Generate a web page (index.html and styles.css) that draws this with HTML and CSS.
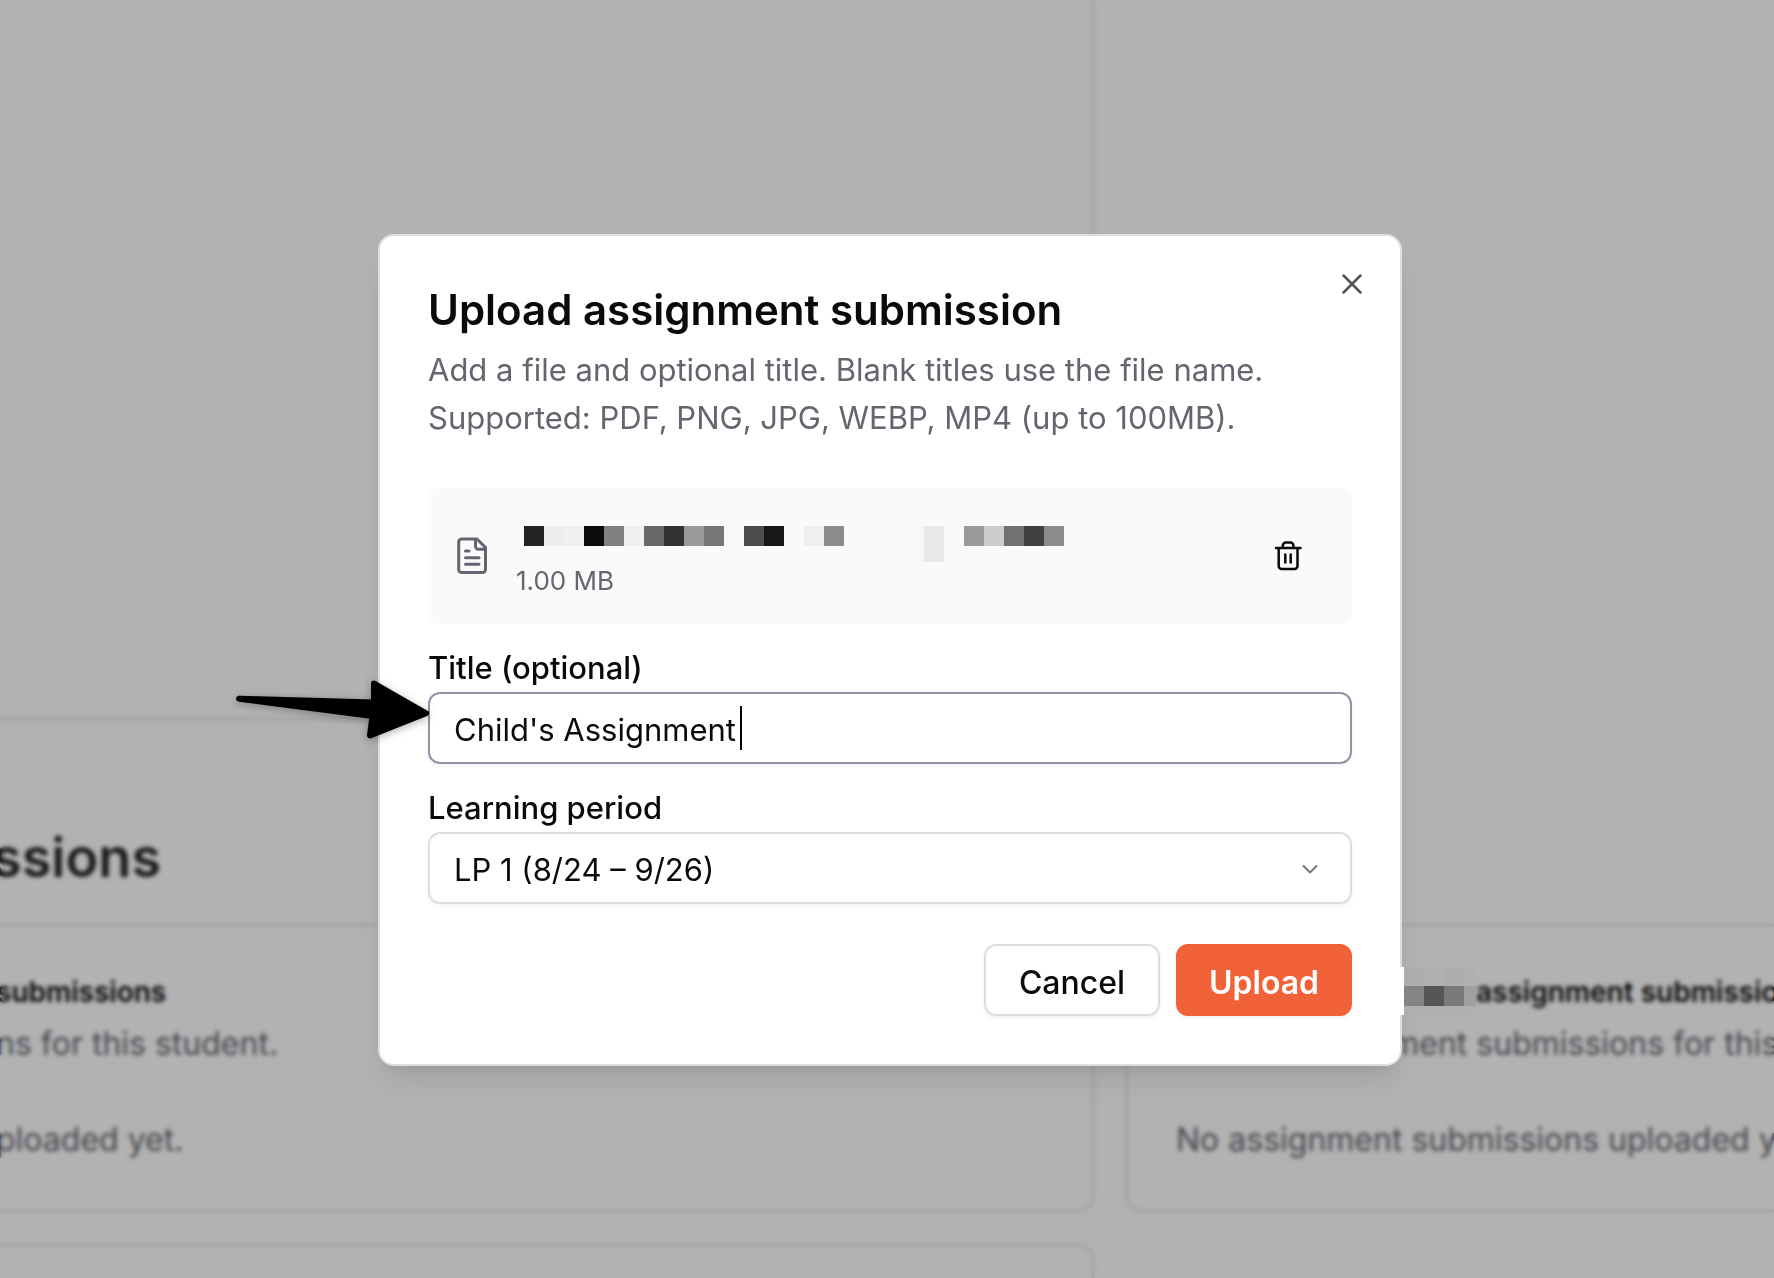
FILE: index.html
```html
<!DOCTYPE html>
<html lang="en">
<head>
<meta charset="utf-8">
<meta name="viewport" content="width=device-width, initial-scale=1">
<title>Upload assignment submission</title>
<link rel="stylesheet" href="styles.css">
</head>
<body>
<main class="page">
  <section class="panel"></section>
  <header class="section-head"><h1>ssions</h1></header>
  <article class="card card-left">
    <h2>submissions</h2>
    <p>ns for this student.</p>
    <p class="empty">ploaded yet.</p>
  </article>
  <article class="card card-right">
    <h2><span class="name-slot"></span>assignment submissions</h2>
    <p>Upload assignment submissions for this student.</p>
    <p class="empty">No assignment submissions uploaded yet.</p>
  </article>
  <article class="card card-left card-next"></article>
</main>

<div class="overlay">
  <div class="dialog" role="dialog" aria-modal="true" aria-labelledby="dialog-title">
    <h2 class="dialog-title" id="dialog-title">Upload assignment submission</h2>
    <p class="dialog-text">Add a file and optional title. Blank titles use the file name. <br>Supported: PDF, PNG, JPG, WEBP, MP4 (up to 100MB).</p>

    <div class="file">
      <svg class="file-icon" viewBox="0 0 40 40" fill="none" stroke="currentColor" stroke-width="3" stroke-linecap="round" stroke-linejoin="round" aria-hidden="true">
        <path d="M25 3H9.700a3 3 0 0 0-3 3V33.500a3 3 0 0 0 3 3H30.500a3 3 0 0 0 3-3V11.500Z"/>
        <path d="M23.500 3.500V10.300a3 3 0 0 0 3 3H33"/>
        <path d="M13.500 15H17M13.500 21.700H27M13.500 28.300H27"/>
      </svg>
      <div class="file-info">
        <svg class="file-name" viewBox="0 0 540 36" shape-rendering="crispEdges" role="img" aria-label="File name hidden">
          <g>
            <path fill="#242424" d="M0 0h20v20H0z"/>
            <path fill="#ededed" d="M20 0h20v20H20z"/>
            <path fill="#f0f0f0" d="M40 0h20v20H40z"/>
            <path fill="#0b0b0d" d="M60 0h20v20H60z"/>
            <path fill="#818181" d="M80 0h20v20H80z"/>
            <path fill="#f0f0f0" d="M100 0h20v20h-20z"/>
            <path fill="#686868" d="M120 0h20v20h-20z"/>
            <path fill="#313131" d="M140 0h20v20h-20z"/>
            <path fill="#9a9a9a" d="M160 0h20v20h-20z"/>
            <path fill="#767676" d="M180 0h20v20h-20z"/>
            <path fill="#f8f8f8" d="M200 0h20v20h-20z"/>
            <path fill="#4c4c4c" d="M220 0h20v20h-20z"/>
            <path fill="#171717" d="M240 0h20v20h-20z"/>
            <path fill="#f0f0f0" d="M280 0h20v20h-20z"/>
            <path fill="#8b8b8b" d="M300 0h20v20h-20z"/>
            <path fill="#f8f8f8" d="M380 0h20v36h-20z"/>
            <path fill="#e8e8e8" d="M400 0h20v36h-20z"/>
            <path fill="#9a9a9a" d="M440 0h20v20h-20z"/>
            <path fill="#cdcdcd" d="M460 0h20v20h-20z"/>
            <path fill="#717171" d="M480 0h20v20h-20z"/>
            <path fill="#404040" d="M500 0h20v20h-20z"/>
            <path fill="#8c8c8c" d="M520 0h20v20h-20z"/>
          </g>
        </svg>
        <span class="file-size">1.00 MB</span>
      </div>
      <button class="icon-button" type="button" aria-label="Remove file">
        <svg viewBox="0 0 32 32" fill="none" stroke="currentColor" stroke-width="2.500" stroke-linecap="round" stroke-linejoin="round" aria-hidden="true">
          <path d="M4 8H28.500M6.700 8V26a3 3 0 0 0 3 3H22.500a3 3 0 0 0 3-3V8M10.800 8V5.500a3 3 0 0 1 3-3h4.600a3 3 0 0 1 3 3V8"/>
          <path d="M13.300 14.500V22.500M18.700 14.500V22.500"/>
        </svg>
      </button>
    </div>

    <div class="field">
      <label for="title">Title (optional)</label>
      <div class="control">
        <input id="title" class="input is-focused" type="text" value="Child's Assignment">
        <span class="caret"></span>
        <svg class="arrow" viewBox="0 0 200 66" aria-hidden="true">
          <path d="M7 22.700 142 26.500 142 7.500 194 37.300 138 59.500 140.500 40Z" fill="#000" stroke="#000" stroke-width="6" stroke-linejoin="round"/>
        </svg>
      </div>
    </div>

    <div class="field">
      <label for="period">Learning period</label>
      <div class="control">
        <select id="period" class="input"><option>LP 1 (8/24 – 9/26)</option></select>
        <svg class="chevron" viewBox="0 0 20 20" fill="none" stroke="currentColor" stroke-width="2" stroke-linecap="round" stroke-linejoin="round" aria-hidden="true"><path d="M3.500 8 10 14.500 16.500 8"/></svg>
      </div>
    </div>

    <div class="actions">
      <button class="button" type="button">Cancel</button>
      <button class="button button-primary" type="button">Upload</button>
    </div>

    <button class="icon-button close" type="button" aria-label="Close">
      <svg viewBox="0 0 32 32" fill="none" stroke="currentColor" stroke-width="2.500" stroke-linecap="round" aria-hidden="true"><path d="M7.500 7.500 24.500 24.500M24.500 7.500 7.500 24.500"/></svg>
    </button>

    <svg class="name-mask" viewBox="0 0 76 48" shape-rendering="crispEdges" aria-hidden="true">
      <path fill="#aeaeae" d="M4 0h20v48H4z"/>
      <path fill="#b0b0b0" d="M24 0h52v48H24z"/>
      <path fill="#adadad" d="M44 0h20v19H44z"/>
      <path fill="#fff" d="M0 0h4v48H0z"/>
      <path fill="#848484" d="M4 19h20v20H4z"/>
      <path fill="#565656" d="M24 19h20v20H24z"/>
      <path fill="#7a7a7a" d="M44 19h20v20H44z"/>
      <path fill="#a0a0a0" d="M64 19h12v20H64z"/>
    </svg>
  </div>
</div>
</body>
</html>
```
FILE: styles.css
```css
* { box-sizing: border-box; }

body {
  margin: 0;
  background: #fff;
  color: #0a0a0a;
  font-family: Inter, "Liberation Sans", sans-serif;
}

h1, h2, p { margin: 0; }

button, input, select { font: inherit; color: inherit; }

/* Page behind the dialog */
.page {
  display: grid;
  grid-template-columns: minmax(0, 1094fr) minmax(0, 648fr);
  grid-template-rows: auto auto auto 1fr;
  column-gap: 32px;
  min-height: 100vh;
}

.panel {
  grid-column: 1;
  height: 720px;
  border: solid #dedede;
  border-width: 0 2px 2px 0;
}

.section-head {
  grid-column: 1;
  padding: 106px 0 34px;
  overflow: hidden;
}

.section-head h1 {
  margin-left: -8px;
  font-size: 54px;
  line-height: 64px;
  font-weight: 600;
  color: #27272a;
}

.card {
  padding: 46px 0;
  border: 2px solid #dedede;
  white-space: nowrap;
  overflow: hidden;
}

.card-left {
  grid-column: 1;
  border-left: 0;
  border-radius: 0 16px 16px 0;
}

.card-left h2,
.card-left p { margin-left: -4px; }

.card-right {
  grid-column: 2;
  padding-left: 48px;
  border-right: 0;
  border-radius: 16px 0 0 16px;
}

.card-next {
  margin-top: 32px;
  padding: 0;
  border-bottom: 0;
  border-radius: 0 16px 0 0;
}

.card h2 {
  font-size: 28px;
  line-height: 40px;
  font-weight: 600;
}

.card p {
  margin-top: 8px;
  font-size: 32px;
  line-height: 48px;
  color: #65656f;
}

.card .empty { margin-top: 48px; }

.name-slot {
  display: inline-block;
  width: 300px;
}

/* Dialog */
.overlay {
  position: fixed;
  inset: 0;
  display: flex;
  justify-content: center;
  align-items: flex-start;
  padding: 234px 0 48px 6px;
  background: rgba(0, 0, 0, 0.3);
  backdrop-filter: blur(2px);
}

.dialog {
  position: relative;
  width: 100%;
  max-width: 1024px;
  padding: 48px;
  border: 2px solid #dedede;
  border-radius: 16px;
  background: #fff;
  box-shadow: 0 20px 30px -6px rgba(0, 0, 0, 0.1), 0 8px 12px -8px rgba(0, 0, 0, 0.1);
}

.dialog-title {
  font-size: 42px;
  line-height: 52px;
  font-weight: 600;
}

.dialog-text {
  margin-top: 10px;
  font-size: 31px;
  line-height: 48px;
  color: #65656f;
}

.file {
  display: flex;
  align-items: center;
  gap: 24px;
  margin-top: 46px;
  padding: 24px 48px 24px 24px;
  border-radius: 12px;
  background: #fafafa;
  color: #65656f;
}

.file-icon {
  width: 40px;
  height: 40px;
}

.file-info {
  flex: 1;
  display: flex;
  flex-direction: column;
  padding-top: 14px;
}

.file-name {
  width: 540px;
  height: 36px;
  margin-left: 8px;
}

.file-size {
  font-size: 26px;
  line-height: 38px;
}

.icon-button {
  width: 32px;
  height: 32px;
  padding: 0;
  border: 0;
  background: none;
  color: #0a0a0a;
}

.icon-button svg {
  display: block;
  width: 32px;
  height: 32px;
}

.close {
  position: absolute;
  top: 32px;
  right: 32px;
  color: #545454;
}

.field { margin-top: 22px; }

.field label {
  display: block;
  margin-bottom: 2px;
  font-size: 31px;
  line-height: 44px;
  font-weight: 500;
}

.control {
  position: relative;
  display: grid;
  align-items: center;
}

.input {
  display: block;
  grid-area: 1 / 1;
  width: 100%;
  height: 72px;
  padding: 2px 24px 0;
  border: 2px solid #dedede;
  border-radius: 12px;
  background: #fff;
  box-shadow: 0 2px 4px rgba(0, 0, 0, 0.05);
  font-size: 31px;
  appearance: none;
  outline: none;
}

.is-focused { border-color: #8e95a5; }

.caret {
  position: absolute;
  left: 312px;
  top: 14px;
  width: 2px;
  height: 44px;
  background: #000;
}

.arrow {
  position: absolute;
  left: -196px;
  top: -16px;
  width: 200px;
  height: 66px;
  filter: drop-shadow(0 2px 4px rgba(0, 0, 0, 0.3));
}

.chevron {
  grid-area: 1 / 1;
  justify-self: end;
  width: 20px;
  height: 20px;
  margin-right: 32px;
  color: #777;
  pointer-events: none;
}

.actions {
  display: flex;
  justify-content: flex-end;
  gap: 16px;
  margin-top: 40px;
}

.button {
  min-width: 176px;
  height: 72px;
  padding: 4px 30px 0;
  border: 2px solid #dedede;
  border-radius: 12px;
  background: #fff;
  box-shadow: 0 2px 4px rgba(0, 0, 0, 0.06);
  font-size: 32px;
  font-weight: 500;
}

.button-primary {
  border-color: #f16238;
  background: #f16238;
  color: #fff;
  font-weight: 600;
}

.name-mask {
  position: absolute;
  left: 100%;
  top: 731px;
  width: 76px;
  height: 48px;
}
```
